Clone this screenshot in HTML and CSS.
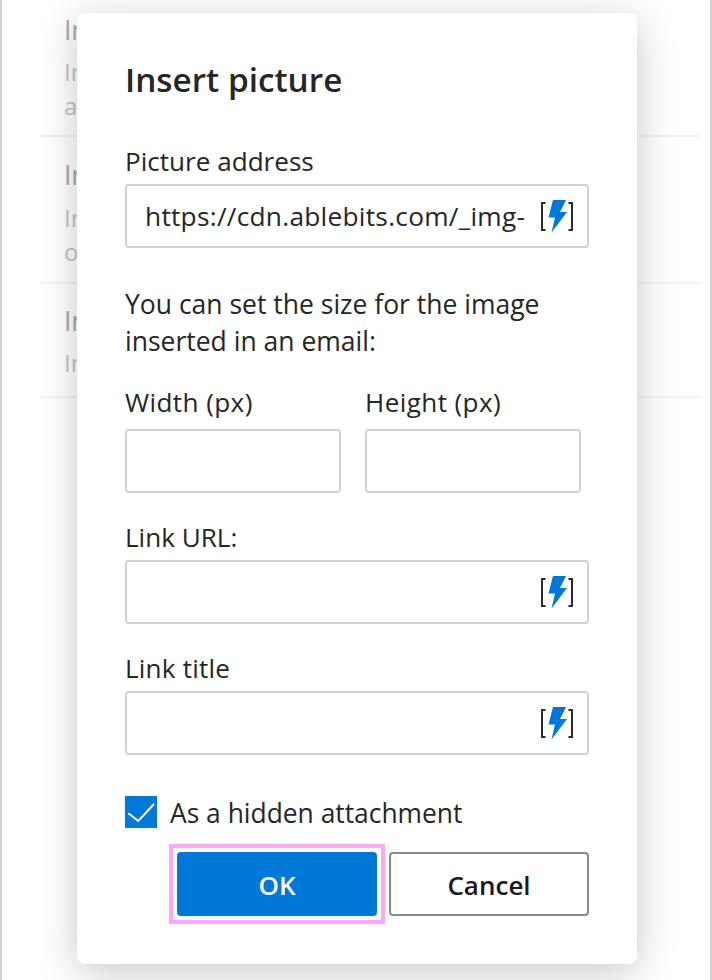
FILE: index.html
```html
<!DOCTYPE html>
<html lang="en">
<head>
<meta charset="utf-8">
<title>Insert picture</title>
<link rel="stylesheet" href="styles.css">
</head>
<body>
<svg class="defs" width="0" height="0" aria-hidden="true">
  <symbol id="bolt" viewBox="0 0 36 36">
    <path d="M6.500 5H3V32H6.500" fill="none" stroke="#2b2b2b" stroke-width="2"/>
    <path d="M29.500 5H33V32H29.500" fill="none" stroke="#2b2b2b" stroke-width="2"/>
    <path d="M14 2H27L21 14H28L12.500 34.500L16 19.500H9.500Z" fill="#0078d7"/>
  </symbol>
</svg>
<main class="page">
  <section class="row row-one">
    <h3 class="row-title">In</h3>
    <p class="row-text">In<br>a</p>
  </section>
  <section class="row row-two">
    <h3 class="row-title">In</h3>
    <p class="row-text">In<br>o</p>
  </section>
  <section class="row row-three">
    <h3 class="row-title">In</h3>
    <p class="row-text">In</p>
  </section>
</main>
<div class="dialog" role="dialog">
  <h2 class="dialog-title">Insert picture</h2>
  <label class="label label-first">Picture address</label>
  <div class="field">
    <input class="input input-icon input-url" type="text" value="https://cdn.ablebits.com/_img-blog/insert-picture.png">
    <svg class="bolt"><use href="#bolt"/></svg>
  </div>
  <p class="hint">You can set the size for the image inserted in an email:</p>
  <div class="size-row">
    <div class="size-col">
      <label class="label label-wide">Width (px)</label>
      <input class="input" type="text">
    </div>
    <div class="size-col">
      <label class="label label-wide">Height (px)</label>
      <input class="input" type="text">
    </div>
  </div>
  <label class="label label-gap">Link URL:</label>
  <div class="field">
    <input class="input input-icon" type="text">
    <svg class="bolt"><use href="#bolt"/></svg>
  </div>
  <label class="label label-gap label-title">Link title</label>
  <div class="field">
    <input class="input input-icon" type="text">
    <svg class="bolt"><use href="#bolt"/></svg>
  </div>
  <div class="check-row">
    <span class="check">
      <svg width="32" height="32" viewBox="0 0 32 32"><path d="M3.300 17.300L13.300 25L29 8" fill="none" stroke="#fff" stroke-width="2"/></svg>
    </span>
    <span class="check-label">As a hidden attachment</span>
  </div>
  <div class="actions">
    <button class="btn btn-primary" type="button">OK</button>
    <button class="btn btn-secondary" type="button">Cancel</button>
  </div>
</div>
</body>
</html>
```
FILE: styles.css
```css
* { box-sizing: border-box; }
html, body { margin: 0; height: 100%; }
body {
  position: relative;
  width: 712px;
  height: 980px;
  overflow: hidden;
  background: #fff;
  font-family: "Open Sans", "Noto Sans", sans-serif;
  color: #262626;
}
.defs { position: absolute; }
.page {
  height: 980px;
  border-left: 2px solid #d2d2d2;
  border-right: 2px solid #d2d2d2;
  padding: 0 10px 0 38px;
}
.row { padding-left: 24px; border-bottom: 2px solid #f3f3f3; }
.row-one { height: 137px; padding-top: 12px; }
.row-two { height: 147px; padding-top: 20px; }
.row-three { height: 114px; padding-top: 19px; }
.row-title { margin: 0; font-size: 26.400px; font-weight: 400; line-height: 36px; color: #a9a9a9; }
.row-text { margin: 7px 0 0; font-size: 24px; line-height: 34px; color: #c4c4c4; }
.row-two .row-text { margin-top: 8px; }

.dialog {
  position: absolute;
  left: 77px;
  top: 13px;
  width: 560px;
  height: 951px;
  padding: 43px 48px 0 48px;
  background: #fff;
  border-radius: 8px;
  box-shadow: 0 8px 40px rgba(0, 0, 0, .22);
}
.dialog-title { margin: 0; font-size: 33.300px; font-weight: 600; line-height: 46px; color: #262626; }
.label { display: block; font-size: 26.100px; line-height: 36px; color: #262626; }
.label-first { margin-top: 41px; }
.label-gap { margin-top: 26px; }
.label-wide { letter-spacing: .4px; }
.label-title { letter-spacing: .2px; }
.field { position: relative; margin-top: 5px; }
.input {
  display: block;
  width: 100%;
  height: 64px;
  padding: 0 18px;
  border: 2px solid #d2d2d2;
  border-radius: 4px;
  background: #fff;
  font: inherit;
  font-size: 26.300px;
  color: #262626;
  outline: none;
}
.input-icon { padding-right: 62px; }
.input-url { letter-spacing: .25px; }
.bolt { position: absolute; right: 14px; top: 14px; width: 36px; height: 36px; }
.hint { margin: 38px 0 0; width: 440px; font-size: 26.500px; line-height: 37px; }
.size-row { display: flex; gap: 24px; margin-top: 24px; width: 456px; }
.size-col { width: 216px; }
.size-col .input { margin-top: 9px; }
.check-row { display: flex; align-items: center; gap: 13px; margin-top: 41px; height: 32px; }
.check { display: block; width: 32px; height: 32px; background: #0078d7; flex: none; }
.check svg { display: block; }
.check-label { font-size: 26.400px; line-height: 36px; margin-top: 2px; }
.actions { display: flex; justify-content: flex-end; gap: 12px; margin-top: 24px; }
.btn {
  position: relative;
  width: 200px;
  height: 64px;
  padding: 2px 0 0;
  border-radius: 4px;
  font: inherit;
  font-size: 26px;
  font-weight: 600;
}
.btn-primary {
  border: none;
  background: #0078d7;
  color: #fff;
}
.btn-primary::after {
  content: "";
  position: absolute;
  inset: -8px;
  border: 4px solid #ffa6f8;
}
.btn-secondary { border: 2px solid #8a8a8a; background: #fff; color: #1a1a1a; }
```
